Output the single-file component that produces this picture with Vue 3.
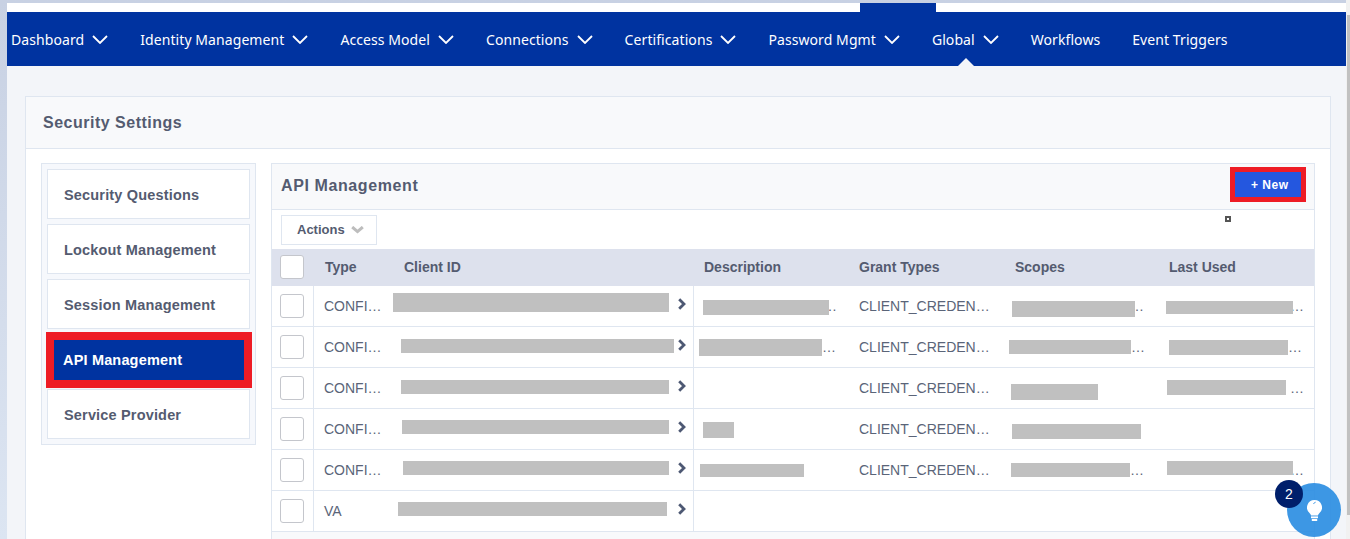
<template>
  <div class="page">
    <div class="top-strip">
      <div class="top-tab"></div>
    </div>
    <nav class="nav">
      <a v-for="item in navItems" :key="item.label" class="nav-item" :class="{ current: item.label === 'Global' }">
        {{ item.label }}
        <svg v-if="item.menu" class="nav-chevron" width="16" height="9" viewBox="0 0 16 9">
          <path d="M1 1l7 7 7-7" fill="none" stroke="#fff" stroke-width="1.8"/>
        </svg>
      </a>
    </nav>

    <main class="main">
      <section class="card">
        <header class="card-head">Security Settings</header>
        <div class="card-body">
          <aside class="side">
            <div
              v-for="item in sideItems"
              :key="item"
              class="side-item"
              :class="{ active: item === 'API Management' }"
            >
              <span>{{ item }}</span>
            </div>
          </aside>

          <div class="panel">
            <div class="panel-head">
              <h2>API Management</h2>
              <button class="new-btn"><span>+ New</span></button>
            </div>
            <div class="toolbar">
              <button class="actions">
                <span>Actions</span>
                <svg width="13" height="8" viewBox="0 0 13 8">
                  <path d="M1.2 1l5.3 4.6L11.8 1" fill="none" stroke="#bdbdbd" stroke-width="3"/>
                </svg>
              </button>
              <i class="handle"></i>
            </div>

            <div class="row head">
              <div class="cell check"><span class="box"></span></div>
              <div class="cell type-head">Type</div>
              <div class="cell">Client ID</div>
              <div class="cell">Description</div>
              <div class="cell">Grant Types</div>
              <div class="cell">Scopes</div>
              <div class="cell">Last Used</div>
            </div>

            <div v-for="(row, i) in rows" :key="i" class="row">
              <div class="cell check line"><span class="box"></span></div>
              <div class="cell type">{{ row.type }}</div>
              <div class="cell client line">
                <span class="redact" :style="redactStyle(row.client)"></span>
                <svg class="more" width="10" height="12" viewBox="0 0 10 12">
                  <path d="M2.2 1.2L7 6l-4.8 4.8" fill="none" stroke="#4d5873" stroke-width="2.8"/>
                </svg>
              </div>
              <div v-for="col in ['desc']" :key="col" class="cell masked">
                <span v-if="row[col]" class="redact" :style="redactStyle(row[col])"></span>
                <span v-if="row[col] && row[col][4] !== undefined" class="dots" :style="dotStyle(row[col])">…</span>
              </div>
              <div class="cell grant">{{ row.grant }}</div>
              <div v-for="col in ['scope', 'used']" :key="col" class="cell masked">
                <span v-if="row[col]" class="redact" :style="redactStyle(row[col])"></span>
                <span v-if="row[col] && row[col][4] !== undefined" class="dots" :style="dotStyle(row[col])">…</span>
              </div>
            </div>
            <div class="panel-foot"></div>
          </div>
        </div>
      </section>
    </main>

    <div class="scrollbar"><div class="thumb"></div></div>

    <div class="help">
      <svg width="15" height="21" viewBox="0 0 15 21">
        <path d="M7.5 0a7.5 7.5 0 0 0-4.6 13.4c.7.6 1 1.3 1.1 2.1h7c.1-.8.4-1.5 1.1-2.1A7.5 7.5 0 0 0 7.5 0z" fill="#fff"/>
        <path d="M6.4 3.6L8.6 2.2" fill="none" stroke="#3d96e4" stroke-width="1"/>
        <rect x="4" y="16.4" width="7" height="1.8" fill="#fff"/>
        <rect x="4.8" y="18.9" width="5.4" height="2.1" fill="#fff"/>
      </svg>
      <span class="help-count">2</span>
    </div>
  </div>
</template>

<script setup>
const navItems = [
  { label: 'Dashboard', menu: true },
  { label: 'Identity Management', menu: true },
  { label: 'Access Model', menu: true },
  { label: 'Connections', menu: true },
  { label: 'Certifications', menu: true },
  { label: 'Password Mgmt', menu: true },
  { label: 'Global', menu: true },
  { label: 'Workflows', menu: false },
  { label: 'Event Triggers', menu: false }
]

const sideItems = [
  'Security Questions',
  'Lockout Management',
  'Session Management',
  'API Management',
  'Service Provider'
]

// redacted blocks: [left offset in cell, top offset in row, width, height, ellipsis offset]
const rows = [
  {
    type: 'CONFI…',
    grant: 'CLIENT_CREDEN…',
    client: [-1, 7, 276, 19],
    desc: [9, 14, 126, 15, -6],
    scope: [7, 15, 123, 16, -5],
    used: [7, 15, 127, 13, -3]
  },
  {
    type: 'CONFI…',
    grant: 'CLIENT_CREDEN…',
    client: [7, 12, 273, 14],
    desc: [5, 12, 123, 17, 0],
    scope: [4, 13, 122, 14, 0],
    used: [10, 13, 119, 15, 0]
  },
  {
    type: 'CONFI…',
    grant: 'CLIENT_CREDEN…',
    client: [7, 12, 268, 14],
    scope: [6, 16, 87, 16],
    used: [8, 12, 119, 15, 4]
  },
  {
    type: 'CONFI…',
    grant: 'CLIENT_CREDEN…',
    client: [8, 11, 267, 14],
    desc: [9, 13, 31, 16],
    scope: [7, 15, 129, 15]
  },
  {
    type: 'CONFI…',
    grant: 'CLIENT_CREDEN…',
    client: [9, 11, 266, 14],
    desc: [6, 14, 104, 13],
    scope: [6, 13, 119, 14, 0],
    used: [8, 11, 126, 14, -3]
  },
  {
    type: 'VA',
    grant: '',
    client: [4, 11, 269, 14]
  }
]

function redactStyle(r) {
  return {
    marginLeft: r[0] + 'px',
    marginTop: r[1] + 'px',
    width: r[2] + 'px',
    height: r[3] + 'px'
  }
}

function dotStyle(r) {
  return { marginLeft: r[4] + 'px' }
}
</script>

<style>
html,
body {
  margin: 0;
  height: 100%;
  overflow: hidden;
  background: linear-gradient(#c8d1e3, #dce5f2);
}
</style>

<style scoped>
.page {
  position: relative;
  width: 1350px;
  height: 539px;
  padding: 3px 4px 0 7px;
  box-sizing: border-box;
  overflow: hidden;
  font-family: "Liberation Sans", Arial, sans-serif;
}

.top-strip {
  height: 9px;
  background: #fff;
  padding-left: 853px;
}

.top-tab {
  width: 76px;
  height: 9px;
  background: #0033a0;
}

.nav {
  display: flex;
  align-items: center;
  height: 54px;
  padding-left: 4px;
  background: #0033a0;
  font-family: "Noto Sans", sans-serif;
  font-size: 14px;
  letter-spacing: 0.08px;
}

.nav-item {
  position: relative;
  display: flex;
  align-items: center;
  height: 100%;
  margin-right: 32px;
  color: #fff;
  white-space: nowrap;
}

.nav-chevron {
  margin-left: 8px;
}

.nav-item.current::after {
  content: '';
  position: absolute;
  left: 26px;
  bottom: 0;
  border: 8px solid transparent;
  border-top: 0;
  border-bottom-color: #f3f5f9;
}

.main {
  height: 473px;
  padding: 30px 15px 0 18px;
  box-sizing: border-box;
  background: #f3f5f9;
  overflow: hidden;
}

.card {
  border: 1px solid #dfe6f0;
  background: #fff;
}

.card-head {
  height: 51px;
  padding-left: 17px;
  line-height: 51px;
  background: #f8f9fb;
  border-bottom: 1px solid #dfe6f0;
  font-size: 16px;
  font-weight: 700;
  letter-spacing: 0.5px;
  color: #545b70;
}

.card-body {
  display: flex;
  align-items: flex-start;
  gap: 15px;
  padding: 14px 15px 0;
}

.side {
  flex: none;
  display: flex;
  flex-direction: column;
  gap: 5px;
  width: 215px;
  padding: 5px;
  box-sizing: border-box;
  border: 1px solid #dfe6f0;
  background: #f6f8fc;
}

.side-item {
  height: 50px;
  padding-left: 16px;
  box-sizing: border-box;
  border: 1px solid #dfe6f0;
  background: #fff;
  font-size: 14.5px;
  font-weight: 700;
  letter-spacing: 0.17px;
  line-height: 50px;
  color: #545b70;
}

.side-item.active {
  position: relative;
  z-index: 1;
  height: 56px;
  margin: -2px -2px -4px -1px;
  padding-left: 9px;
  border: 8px solid #ee1c25;
  background: #0033a0;
  line-height: 40px;
  color: #fff;
}

.panel {
  flex: 1;
  min-width: 0;
  border: 1px solid #dfe6f0;
  background: #fff;
}

.panel-head {
  display: flex;
  align-items: center;
  justify-content: space-between;
  height: 45px;
  padding: 0 8px 0 9px;
  background: #f8f9fb;
  border-bottom: 1px solid #dfe6f0;
}

.panel-head h2 {
  margin: -2px 0 0;
  font-size: 16px;
  font-weight: 700;
  letter-spacing: 0.6px;
  color: #545b70;
}

.new-btn {
  align-self: flex-start;
  width: 76px;
  height: 35px;
  margin-top: 3px;
  padding: 0 0 0 16px;
  border: 5px solid #ee1c25;
  background: #2457df;
  color: #fff;
  font-family: inherit;
  font-size: 12px;
  font-weight: 700;
  letter-spacing: 0.5px;
  text-align: left;
}

.toolbar {
  position: relative;
  height: 39px;
  padding: 5px 9px 0;
  box-sizing: border-box;
}

.actions {
  display: flex;
  align-items: center;
  gap: 6px;
  width: 96px;
  height: 30px;
  padding: 0 0 2px 15px;
  border: 1px solid #dfe6f0;
  background: #fff;
  font-family: inherit;
  font-size: 13px;
  font-weight: 700;
  color: #545b70;
}

.actions svg {
  margin-top: 2px;
}

.handle {
  position: absolute;
  left: 953px;
  top: 6px;
  width: 6px;
  height: 6px;
  box-sizing: border-box;
  border: 2px solid #555;
  background: #fff;
}

.row {
  display: grid;
  grid-template-columns: 42px 80px 300px 155px 156px 154px 155px;
  height: 41px;
  box-sizing: border-box;
  border-bottom: 1px solid #dfe6f0;
  font-size: 14px;
  color: #5a6478;
}

.row.head {
  height: 37px;
  border-bottom: 0;
  background: #dde1ed;
  font-weight: 700;
  font-size: 14px;
  color: #545b70;
}

.row.head .cell {
  padding-left: 10px;
  line-height: 37px;
}

.row.head .type-head {
  padding-left: 11px;
}

.row.head .check {
  padding: 6px 0 0 8px;
}

.cell {
  min-width: 0;
  box-sizing: border-box;
  white-space: nowrap;
}

.line {
  border-right: 1px solid #dfe6f0;
}

.check {
  padding: 8px 0 0 8px;
}

.box {
  display: block;
  width: 24px;
  height: 24px;
  box-sizing: border-box;
  border: 1px solid #c4c6cc;
  border-radius: 3px;
  background: #fff;
}

.type,
.grant {
  padding-left: 10px;
  line-height: 40px;
}

.client,
.masked {
  display: flex;
  align-items: flex-start;
}

.redact {
  position: relative;
  z-index: 1;
  flex: none;
  display: block;
  background: #c0c0c0;
}

.more {
  flex: none;
  margin-top: 12px;
  margin-left: auto;
  margin-right: 6px;
}

.dots {
  flex: none;
  margin-top: 12px;
  font-size: 14px;
  line-height: 16px;
  color: #5a6478;
}

.panel-foot {
  height: 20px;
  background: #f8f9fb;
}

.scrollbar {
  position: absolute;
  right: 0;
  top: 0;
  width: 4px;
  height: 539px;
  background: #f1f1f1;
}

.thumb {
  width: 3px;
  height: 500px;
  margin: 15px 0 0 1px;
  background: #c1c1c1;
}

.help {
  position: absolute;
  left: 1287px;
  top: 483px;
  display: flex;
  align-items: center;
  justify-content: center;
  width: 54px;
  height: 54px;
  border-radius: 50%;
  background: rgba(44, 142, 226, 0.92);
}

.help-count {
  position: absolute;
  left: -12px;
  top: -3px;
  width: 28px;
  height: 28px;
  border-radius: 50%;
  background: #001f6b;
  color: #fff;
  font-size: 14px;
  line-height: 28px;
  text-align: center;
}
</style>
